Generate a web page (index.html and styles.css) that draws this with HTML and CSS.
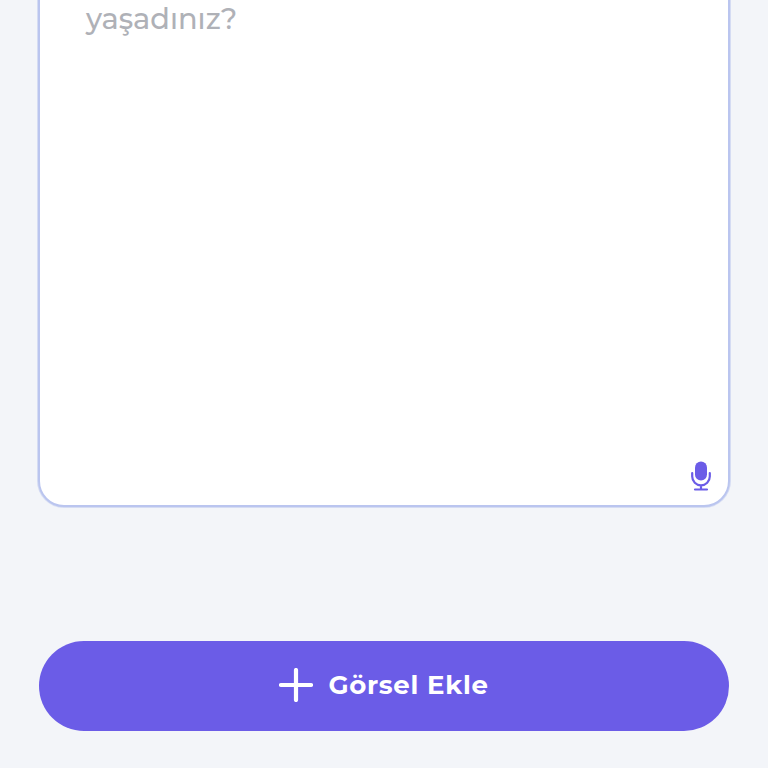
FILE: index.html
```html
<!DOCTYPE html>
<html lang="tr">
<head>
<meta charset="utf-8">
<title>Görsel Ekle</title>
<link rel="stylesheet" href="styles.css">
</head>
<body>
<main class="page">
  <section class="card">
    <p class="placeholder">yaşadınız?</p>
    <svg class="mic" viewBox="0 0 20 30" aria-hidden="true">
      <rect x="4" y="0.5" width="12" height="19" rx="6" fill="#6b5ce7"/>
      <path d="M1.2 12v3.5a8.8 8.8 0 0 0 17.6 0V12M10 24.5v4M4 28.5h12" fill="none" stroke="#6b5ce7" stroke-width="2.2" stroke-linecap="round"/>
    </svg>
  </section>
  <button class="add" type="button">
    <svg class="plus" viewBox="0 0 34 34" aria-hidden="true">
      <path d="M17 2v30M2 17h30" fill="none" stroke="#fff" stroke-width="4.2" stroke-linecap="round"/>
    </svg>
    <span>Görsel Ekle</span>
  </button>
</main>
</body>
</html>
```
FILE: styles.css
```css
* { box-sizing: border-box; }
html, body { margin: 0; height: 100%; overflow: hidden; }
body { background: #f3f5f9; font-family: "Montserrat", Inter, "Open Sans", "Liberation Sans", sans-serif; }
.page {
  height: 768px;
  display: flex;
  flex-direction: column;
  justify-content: flex-end;
  padding: 0 39px 37px;
}
.card {
  flex: none;
  height: 561px;
  margin: 0 -1px 134px;
  padding: 52px 17px 14px 46px;
  display: flex;
  flex-direction: column;
  justify-content: space-between;
  background: #fff;
  border: 2px solid #bac5ef;
  border-radius: 26px;
  box-shadow: 0 0 0 1px rgba(188, 198, 239, .55);
}
.placeholder {
  margin: 0;
  font-size: 28.8px;
  font-weight: 500;
  line-height: 38px;
  color: #afb1b7;
}
.mic { align-self: flex-end; width: 20px; height: 30px; display: block; }
.add {
  flex: none;
  height: 90px;
  border: 0;
  padding: 0 0 2px;
  border-radius: 45px;
  background: #6b5ce7;
  color: #fff;
  display: flex;
  align-items: center;
  justify-content: center;
  gap: 15px;
  font: 700 26px/1 "Montserrat", Inter, "Liberation Sans", sans-serif;
  letter-spacing: .7px;
}
.plus { width: 34px; height: 34px; display: block; }
```
